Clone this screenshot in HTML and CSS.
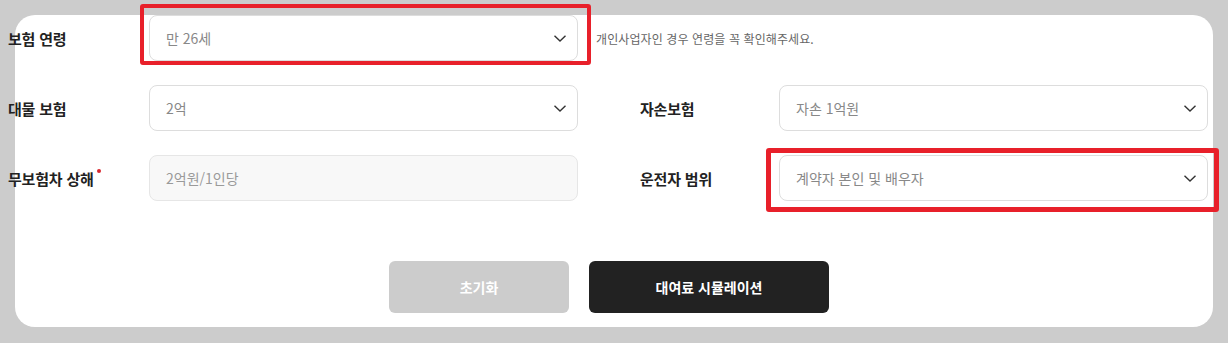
FILE: index.html
```html
<!DOCTYPE html>
<html lang="ko">
<head>
<meta charset="utf-8">
<title>보험 설정</title>
<link rel="stylesheet" href="styles.css">
</head>
<body>
<div class="card">
  <div class="form">
    <div class="field field-wide">
      <span class="label">보험 연령</span>
      <div class="select hl-top">
        <span class="value">만 26세</span>
        <svg class="chev" width="12" height="7" viewBox="0 0 12 7"><path d="M0.5 0.8 L6 6 L11.5 0.8" fill="none" stroke="#333" stroke-width="1.4"/></svg>
      </div>
      <span class="hint">개인사업자인 경우 연령을 꼭 확인해주세요.</span>
    </div>

    <div class="field">
      <span class="label">대물 보험</span>
      <div class="select">
        <span class="value">2억</span>
        <svg class="chev" width="12" height="7" viewBox="0 0 12 7"><path d="M0.5 0.8 L6 6 L11.5 0.8" fill="none" stroke="#333" stroke-width="1.4"/></svg>
      </div>
    </div>
    <div class="field field-right">
      <span class="label">자손보험</span>
      <div class="select">
        <span class="value">자손 1억원</span>
        <svg class="chev" width="12" height="7" viewBox="0 0 12 7"><path d="M0.5 0.8 L6 6 L11.5 0.8" fill="none" stroke="#333" stroke-width="1.4"/></svg>
      </div>
    </div>

    <div class="field">
      <span class="label">무보험차 상해<i class="req"></i></span>
      <div class="select disabled">
        <span class="value">2억원/1인당</span>
      </div>
    </div>
    <div class="field field-right">
      <span class="label">운전자 범위</span>
      <div class="select hl-bottom">
        <span class="value">계약자 본인 및 배우자</span>
        <svg class="chev" width="12" height="7" viewBox="0 0 12 7"><path d="M0.5 0.8 L6 6 L11.5 0.8" fill="none" stroke="#333" stroke-width="1.4"/></svg>
      </div>
    </div>

    <div class="actions">
      <button class="btn btn-reset">초기화</button>
      <button class="btn btn-primary">대여료 시뮬레이션</button>
    </div>
  </div>
</div>
</body>
</html>
```

FILE: styles.css
```css
* { box-sizing: border-box; }
html, body { margin: 0; padding: 0; }
body {
  background: #cccccc;
  width: 1228px;
  height: 343px;
  overflow: hidden;
  font-family: "Noto Sans CJK KR", "Noto Sans", sans-serif;
}
.card {
  margin: 15px 0 0 15px;
  width: 1198px;
  height: 312px;
  background: #fff;
  border-radius: 20px;
}
.form {
  margin-left: -7px;
  width: 1200px;
  display: grid;
  grid-template-columns: 570px 568px;
  column-gap: 62px;
  row-gap: 24px;
}
.field {
  display: flex;
  align-items: center;
  height: 46px;
}
.field-wide { grid-column: 1 / -1; }
.label {
  width: 141px;
  flex: none;
  font-size: 15px;
  font-weight: 700;
  color: #222;
  position: relative;
  letter-spacing: -0.2px;
}
.field-right .label { width: 139px; }
.req {
  display: inline-block;
  width: 4px;
  height: 4px;
  border-radius: 50%;
  background: #d8262f;
  vertical-align: top;
  margin: 1px 0 0 3px;
}
.select {
  position: relative;
  width: 429px;
  height: 46px;
  flex: none;
  border: 1px solid #dddddd;
  border-radius: 8px;
  background: #fff;
  display: flex;
  align-items: center;
  justify-content: space-between;
  padding: 0 11px 0 16px;
}
.select.disabled {
  background: #f8f8f8;
  border-color: #e6e6e6;
}
.value {
  font-size: 14px;
  color: #888;
}
.disabled .value { color: #9a9a9a; }
.chev { display: block; }
.hint {
  margin-left: 18px;
  font-size: 12px;
  color: #666;
  letter-spacing: 0.1px;
}
.hl-top::after, .hl-bottom::after {
  content: "";
  position: absolute;
  border: 4px solid #e8202a;
  border-radius: 3px;
  pointer-events: none;
}
.hl-top::after { top: -12px; right: -14px; bottom: -5px; left: -10px; }
.hl-bottom::after { top: -8px; right: -12px; bottom: -12px; left: -14px; border-width: 5px; }
.actions {
  grid-column: 1 / -1;
  display: flex;
  justify-content: center;
  gap: 20px;
  margin-top: 36px;
  padding-left: 2px;
}
.btn {
  height: 52px;
  border: 0;
  border-radius: 6px;
  font-family: inherit;
  font-size: 14px;
  font-weight: 700;
  color: #fff;
}
.btn-reset { width: 180px; background: #cccccc; }
.btn-primary { width: 240px; background: #222222; }
```
